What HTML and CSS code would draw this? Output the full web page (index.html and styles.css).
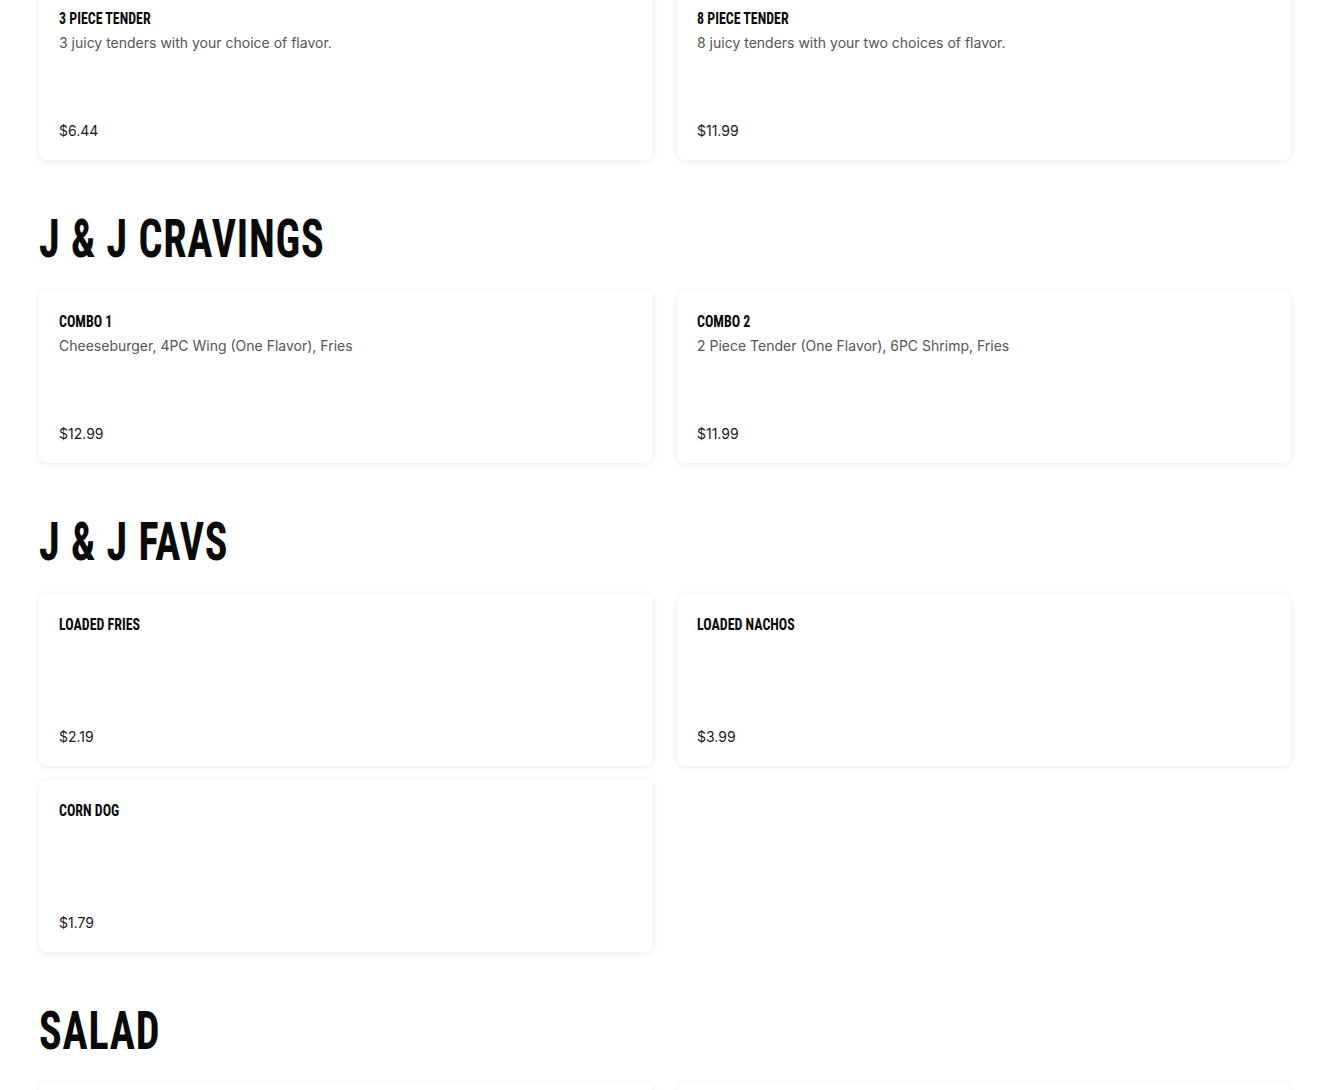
FILE: index.html
```html
<!DOCTYPE html>
<html>
<head>
<meta charset="utf-8">
<link rel="stylesheet" href="styles.css">
</head>
<body>
<main class="menu">
  <section class="section first">
    <div class="grid">
      <div class="card">
        <div class="card-top">
          <h3 class="title"><span>3 Piece Tender</span></h3>
          <p class="desc">3 juicy tenders with your choice of flavor.</p>
        </div>
        <p class="price">$6.44</p>
      </div>
      <div class="card">
        <div class="card-top">
          <h3 class="title"><span>8 Piece Tender</span></h3>
          <p class="desc">8 juicy tenders with your two choices of flavor.</p>
        </div>
        <p class="price">$11.99</p>
      </div>
    </div>
  </section>

  <section class="section">
    <h2 class="heading"><span>J &amp; J Cravings</span></h2>
    <div class="grid">
      <div class="card">
        <div class="card-top">
          <h3 class="title"><span>Combo 1</span></h3>
          <p class="desc">Cheeseburger, 4PC Wing (One Flavor), Fries</p>
        </div>
        <p class="price">$12.99</p>
      </div>
      <div class="card">
        <div class="card-top">
          <h3 class="title"><span>Combo 2</span></h3>
          <p class="desc">2 Piece Tender (One Flavor), 6PC Shrimp, Fries</p>
        </div>
        <p class="price">$11.99</p>
      </div>
    </div>
  </section>

  <section class="section">
    <h2 class="heading"><span>J &amp; J Favs</span></h2>
    <div class="grid">
      <div class="card">
        <div class="card-top">
          <h3 class="title"><span>Loaded Fries</span></h3>
        </div>
        <p class="price">$2.19</p>
      </div>
      <div class="card">
        <div class="card-top">
          <h3 class="title"><span>Loaded Nachos</span></h3>
        </div>
        <p class="price">$3.99</p>
      </div>
      <div class="card">
        <div class="card-top">
          <h3 class="title"><span>Corn Dog</span></h3>
        </div>
        <p class="price">$1.79</p>
      </div>
    </div>
  </section>

  <section class="section">
    <h2 class="heading"><span>Salad</span></h2>
    <div class="grid">
      <div class="card">
        <div class="card-top">
          <h3 class="title">&nbsp;</h3>
        </div>
        <p class="price">&nbsp;</p>
      </div>
      <div class="card">
        <div class="card-top">
          <h3 class="title">&nbsp;</h3>
        </div>
        <p class="price">&nbsp;</p>
      </div>
    </div>
  </section>
</main>
</body>
</html>
```

FILE: styles.css
```css
* {
  box-sizing: border-box;
}

html, body {
  margin: 0;
  padding: 0;
  background: #ffffff;
}

body {
  font-family: Inter, "Liberation Sans", Arial, sans-serif;
  color: #111111;
  overflow: hidden;
}

.menu {
  padding: 0 39px;
  margin-top: -12px;
}

.section {
  margin-top: 44px;
}

.section.first {
  margin-top: 0;
}

.heading {
  margin: 0 0 17px 0;
  font-family: "Roboto Condensed", "Liberation Sans", Arial, sans-serif;
  font-weight: 700;
  font-size: 54px;
  line-height: 70px;
  text-transform: uppercase;
  color: #0a0a0a;
  white-space: nowrap;
  letter-spacing: 1px;
}

.heading span {
  display: inline-block;
  transform: scaleX(0.78);
  transform-origin: left center;
}

.grid {
  display: grid;
  grid-template-columns: 1fr 1fr;
  column-gap: 24px;
  row-gap: 14px;
}

.card {
  background: #ffffff;
  border-radius: 8px;
  box-shadow: 0 1px 6px rgba(0, 0, 0, 0.09);
  height: 172px;
  padding: 21px 20px 19px 20px;
  display: flex;
  flex-direction: column;
  justify-content: space-between;
}

.title {
  margin: 0;
  font-family: "Roboto Condensed", "Liberation Sans", Arial, sans-serif;
  font-weight: 700;
  font-size: 16px;
  line-height: 20px;
  text-transform: uppercase;
  color: #0a0a0a;
  white-space: nowrap;
}

.title span {
  display: inline-block;
  transform: scaleX(0.87);
  transform-origin: left center;
}

.desc {
  margin: 4px 0 0 0;
  font-size: 14px;
  line-height: 20px;
  color: #555555;
}

.price {
  margin: 0;
  font-size: 14px;
  line-height: 20px;
  color: #1a1a1a;
}
```
